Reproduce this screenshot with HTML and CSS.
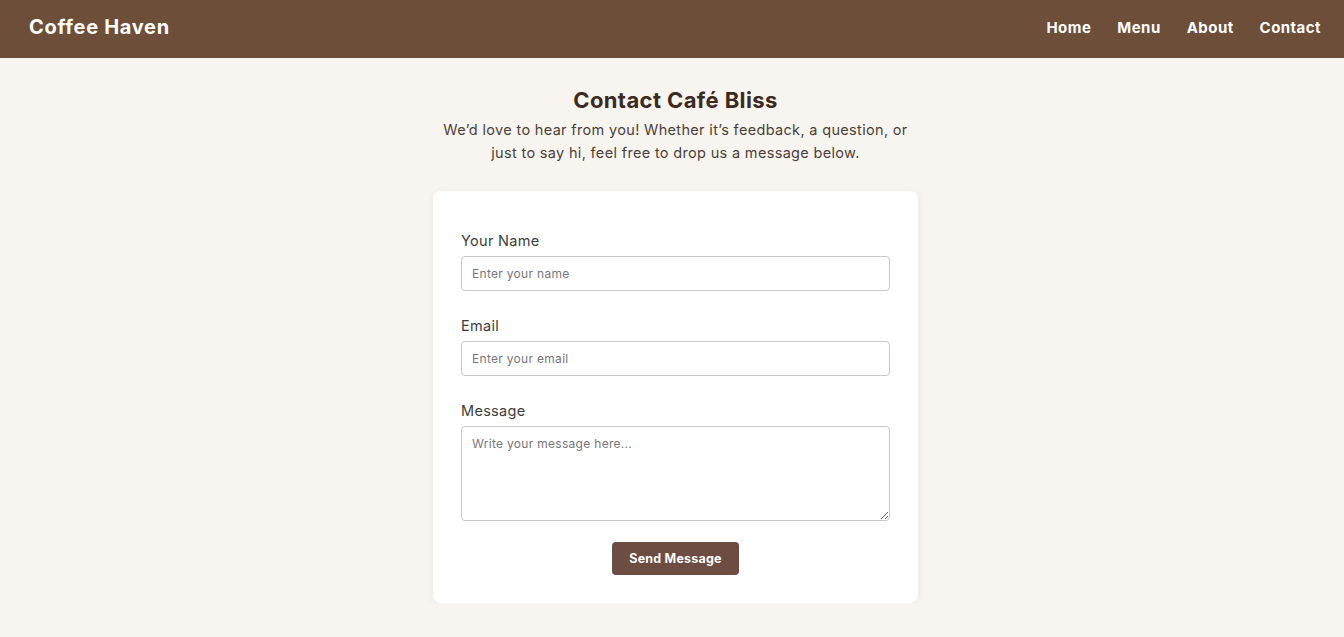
FILE: index.html
```html
<!DOCTYPE html>
<html lang="en">
<head>
<meta charset="utf-8">
<title>Contact Café Bliss</title>
<link rel="stylesheet" href="styles.css">
</head>
<body>
<header class="topbar">
  <div class="brand">Coffee Haven</div>
  <nav class="nav">
    <a href="#">Home</a>
    <a href="#">Menu</a>
    <a href="#">About</a>
    <a href="#">Contact</a>
  </nav>
</header>
<main class="main">
  <section class="intro">
    <h1 class="title">Contact Café Bliss</h1>
    <p class="lead">We’d love to hear from you! Whether it’s feedback, a question, or just to say hi, feel free to drop us a message below.</p>
  </section>
  <form class="card">
    <div class="field">
      <label class="label" for="name">Your Name</label>
      <input class="input" id="name" type="text" placeholder="Enter your name">
    </div>
    <div class="field">
      <label class="label" for="email">Email</label>
      <input class="input" id="email" type="email" placeholder="Enter your email">
    </div>
    <div class="field">
      <label class="label" for="msg">Message</label>
      <textarea class="input textarea" id="msg" placeholder="Write your message here..."></textarea>
    </div>
    <div class="actions">
      <button class="btn" type="button">Send Message</button>
    </div>
  </form>
</main>
</body>
</html>
```
FILE: styles.css
```css
* { box-sizing: border-box; }
html, body { margin: 0; padding: 0; }
body {
  background: #f8f5f0;
  font-family: "Inter", "Open Sans", sans-serif;
  color: #3e2723;
}
.topbar {
  height: 58px;
  background: #6d4e38;
  display: flex;
  align-items: center;
  justify-content: space-between;
  padding: 0 23px 4px 29px;
}
.brand {
  color: #fff;
  font-weight: 700;
  font-size: 20px;
  letter-spacing: 0.7px;
}
.nav {
  display: flex;
  gap: 26px;
}
.nav a {
  color: #fff;
  text-decoration: none;
  font-weight: 700;
  font-size: 15px;
  letter-spacing: 0.45px;
}
.main {
  display: flex;
  flex-direction: column;
  align-items: center;
  padding: 27px 0 0 7px;
}
.intro {
  text-align: center;
  width: 470px;
}
.title {
  margin: 0;
  font-size: 22px;
  font-weight: 700;
  color: #3b2a22;
  line-height: 30px;
  letter-spacing: 0.4px;
}
.lead {
  margin: 3px 0 0;
  font-size: 14.5px;
  line-height: 23px;
  color: #4a3f3a;
  letter-spacing: 0.33px;
}
.card {
  margin-top: 27px;
  width: 485px;
  background: #fff;
  border-radius: 8px;
  padding: 40px 28px 28px;
  box-shadow: 0 2px 8px rgba(0,0,0,0.06);
  display: flex;
  flex-direction: column;
  gap: 25px;
}
.field {
  display: flex;
  flex-direction: column;
  gap: 6px;
}
.label {
  font-size: 14.5px;
  color: #3d3d3d;
  line-height: 19px;
  letter-spacing: 0.3px;
}
.input {
  height: 35px;
  border: 1px solid #c8c8c8;
  border-radius: 4px;
  padding: 0 10px;
  font-family: inherit;
  font-size: 12px;
  letter-spacing: 0.3px;
  color: #333;
  background: #fff;
}
.input::placeholder { color: #777; }
.textarea {
  height: 95px;
  padding: 9px 10px;
  resize: vertical;
}
.actions {
  display: flex;
  justify-content: center;
  margin-top: -4px;
}
.btn {
  width: 127px;
  height: 33px;
  background: #6d4c41;
  color: #fff;
  border: none;
  border-radius: 4px;
  font-family: inherit;
  font-weight: 700;
  font-size: 12.5px;
  letter-spacing: 0.2px;
}
```
